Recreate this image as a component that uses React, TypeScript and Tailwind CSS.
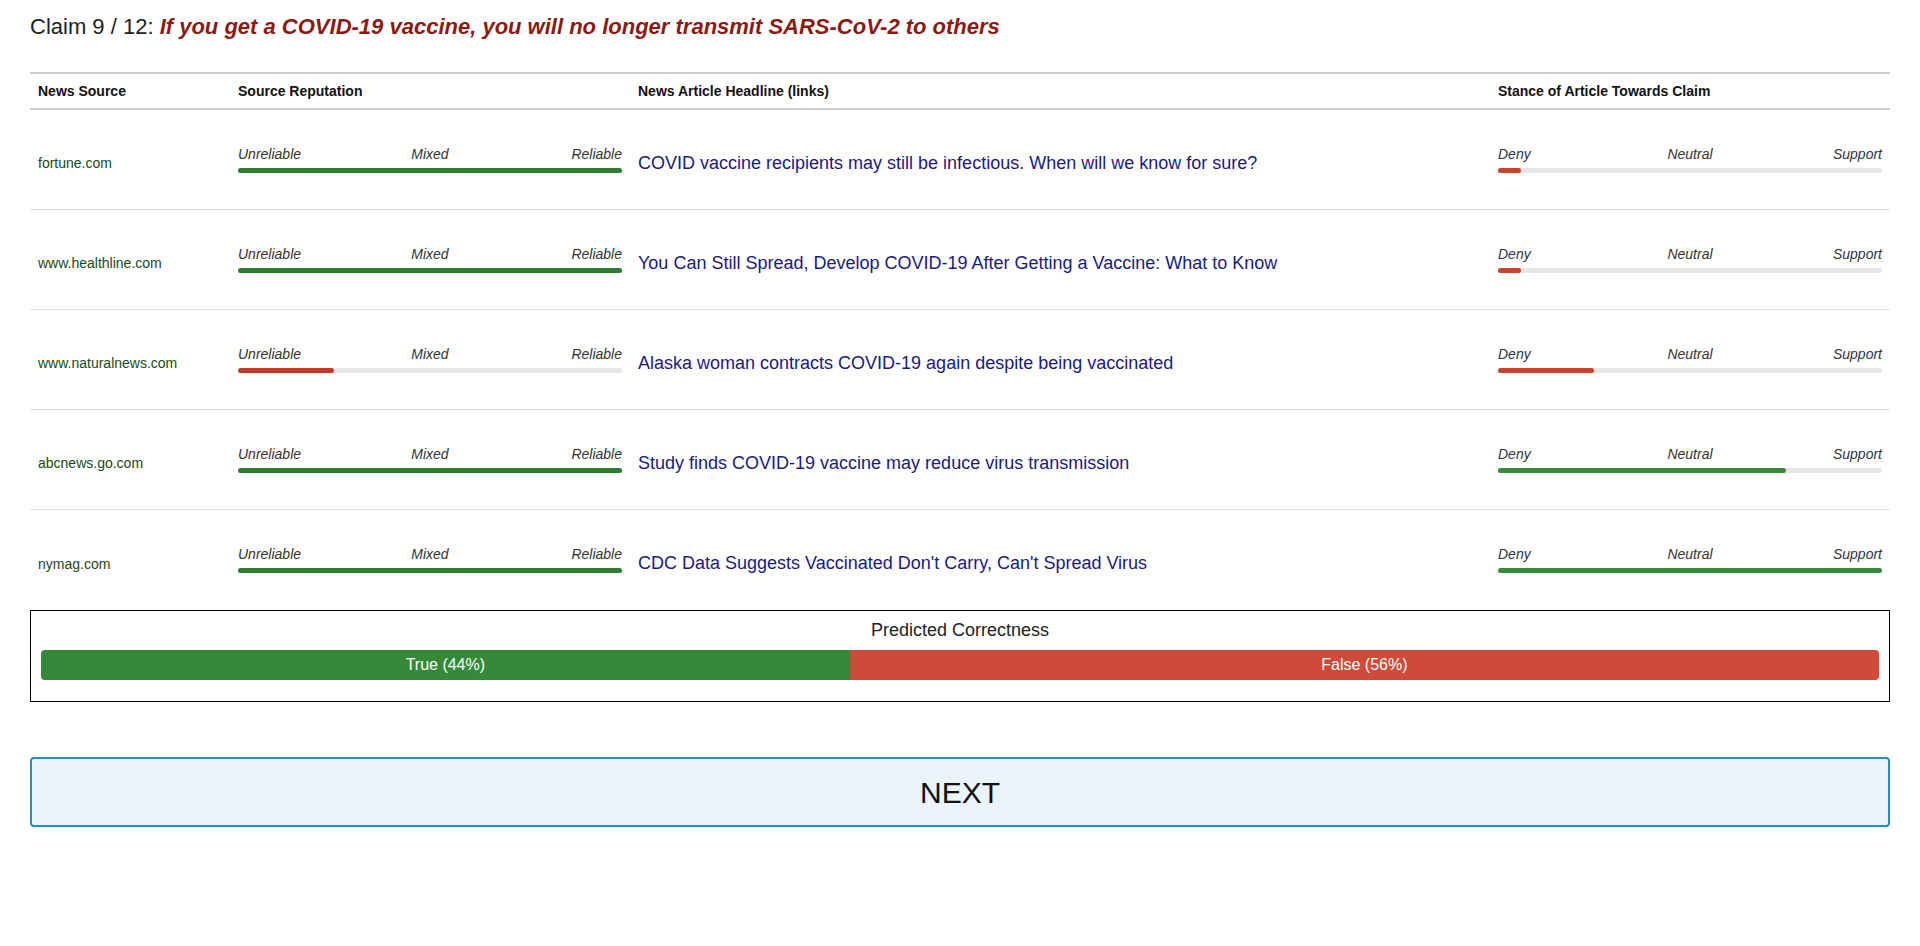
const rows = [
  {
    source: 'fortune.com',
    rep: 100,
    repColor: 'bg-[#2e7d32]',
    headline: 'COVID vaccine recipients may still be infectious. When will we know for sure?',
    stance: 6,
    stanceColor: 'bg-[#c9422f]',
  },
  {
    source: 'www.healthline.com',
    rep: 100,
    repColor: 'bg-[#2e7d32]',
    headline: 'You Can Still Spread, Develop COVID-19 After Getting a Vaccine: What to Know',
    stance: 6,
    stanceColor: 'bg-[#c9422f]',
  },
  {
    source: 'www.naturalnews.com',
    rep: 25,
    repColor: 'bg-[#c0392b]',
    headline: 'Alaska woman contracts COVID-19 again despite being vaccinated',
    stance: 25,
    stanceColor: 'bg-[#c9422f]',
  },
  {
    source: 'abcnews.go.com',
    rep: 100,
    repColor: 'bg-[#2e7d32]',
    headline: 'Study finds COVID-19 vaccine may reduce virus transmission',
    stance: 75,
    stanceColor: 'bg-[#3a8a3e]',
  },
  {
    source: 'nymag.com',
    rep: 100,
    repColor: 'bg-[#2e7d32]',
    headline: "CDC Data Suggests Vaccinated Don't Carry, Can't Spread Virus",
    stance: 100,
    stanceColor: 'bg-[#3a8a3e]',
  },
]

function Scale({ labels, value, color }: { labels: string[]; value: number; color: string }) {
  return (
    <div className="pt-[36px]">
      <div className="grid grid-cols-3 text-[14px] italic leading-4 text-[#333]">
        <span className="text-left">{labels[0]}</span>
        <span className="text-center">{labels[1]}</span>
        <span className="text-right">{labels[2]}</span>
      </div>
      <div className="mt-[6px] h-[5px] w-full rounded-sm bg-[#e6e6e6]">
        <div className={`h-full rounded-sm ${color}`} style={{ width: `${value}%` }} />
      </div>
    </div>
  )
}

export default function App() {
  return (
    <div className="min-h-screen bg-white px-[30px] pt-[14px] font-['Liberation_Sans',Arial,sans-serif] text-[#222]">
      <h2 className="text-[22px] leading-[26px]">
        Claim 9 / 12:{' '}
        <span className="font-bold italic text-[#8b1a12]">
          If you get a COVID-19 vaccine, you will no longer transmit SARS-CoV-2 to others
        </span>
      </h2>

      <div className="mt-[32px]">
        <div className="grid h-[38px] grid-cols-[200px_400px_860px_1fr] items-center border-y-2 border-[#cfcfcf] text-[14px] font-bold text-[#111]">
          <div className="px-2">News Source</div>
          <div className="px-2">Source Reputation</div>
          <div className="px-2">News Article Headline (links)</div>
          <div className="px-2">Stance of Article Towards Claim</div>
        </div>

        {rows.map((r, i) => (
          <div
            key={r.source}
            className={`grid h-[100px] grid-cols-[200px_400px_860px_1fr] ${
              i < rows.length - 1 ? 'border-b border-[#dcdcdc]' : ''
            }`}
          >
            <div className="flex items-center px-2 pt-2 text-[14px] text-[#174a17]">{r.source}</div>
            <div className="px-2">
              <Scale labels={['Unreliable', 'Mixed', 'Reliable']} value={r.rep} color={r.repColor} />
            </div>
            <div className="flex items-center px-2 pt-[6px]">
              <a href="#" className="text-[18px] leading-5 text-[#1a1a7e]">
                {r.headline}
              </a>
            </div>
            <div className="px-2">
              <Scale labels={['Deny', 'Neutral', 'Support']} value={r.stance} color={r.stanceColor} />
            </div>
          </div>
        ))}
      </div>

      <div className="border border-black px-[10px] pt-[9px] pb-[21px]">
        <div className="text-center text-[18px] leading-[20px] text-[#222]">Predicted Correctness</div>
        <div className="mt-[10px] flex h-[30px] overflow-hidden rounded text-[16px] text-white">
          <div className="flex w-[44%] items-center justify-center bg-[#348a39]">True (44%)</div>
          <div className="flex flex-1 items-center justify-center bg-[#cf4a38]">False (56%)</div>
        </div>
      </div>

      <button className="mt-[55px] flex h-[70px] w-full items-center justify-center rounded border-2 border-[#2a8cbf] bg-[#eaf3fb] text-[30px] text-[#111]">
        NEXT
      </button>
    </div>
  )
}
